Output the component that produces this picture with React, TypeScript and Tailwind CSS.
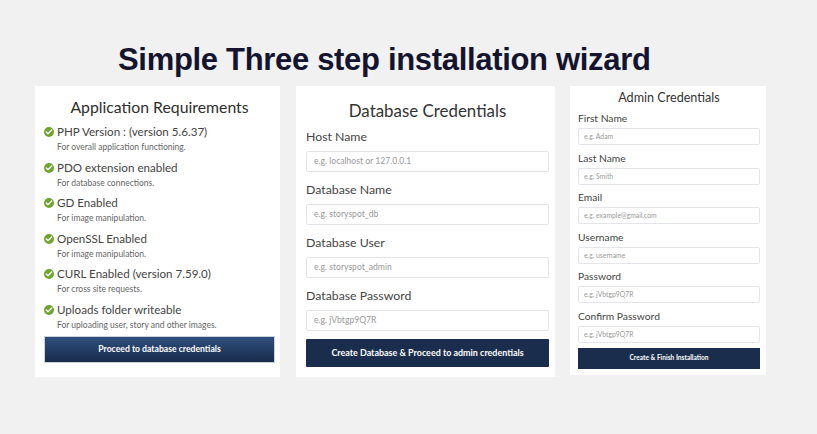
import { Check } from 'lucide-react';

const REQUIREMENTS = [
  { title: 'PHP Version : (version 5.6.37)', note: 'For overall application functioning.' },
  { title: 'PDO extension enabled', note: 'For database connections.' },
  { title: 'GD Enabled', note: 'For image manipulation.' },
  { title: 'OpenSSL Enabled', note: 'For image manipulation.' },
  { title: 'CURL Enabled (version 7.59.0)', note: 'For cross site requests.' },
  { title: 'Uploads folder writeable', note: 'For uploading user, story and other images.' },
];

const DB_FIELDS = [
  { label: 'Host Name', placeholder: 'e.g. localhost or 127.0.0.1' },
  { label: 'Database Name', placeholder: 'e.g. storyspot_db' },
  { label: 'Database User', placeholder: 'e.g. storyspot_admin' },
  { label: 'Database Password', placeholder: 'e.g. jVbtgp9Q7R' },
];

const ADMIN_FIELDS = [
  { label: 'First Name', placeholder: 'e.g. Adam' },
  { label: 'Last Name', placeholder: 'e.g. Smith' },
  { label: 'Email', placeholder: 'e.g. example@gmail.com' },
  { label: 'Username', placeholder: 'e.g. username' },
  { label: 'Password', placeholder: 'e.g. jVbtgp9Q7R' },
  { label: 'Confirm Password', placeholder: 'e.g. jVbtgp9Q7R' },
];

function Requirement({ title, note }: { title: string; note: string }) {
  return (
    <div className="h-[35.6px]">
      <div className="flex items-center gap-[3px] h-[20px]">
        <span className="flex items-center justify-center w-[10px] h-[10px] rounded-full bg-[#6fa52f] shrink-0">
          <Check size={8} strokeWidth={4} className="text-white" />
        </span>
        <span className="text-[11.6px] leading-[20px] text-[#444444]">{title}</span>
      </div>
      <p className="pl-[13px] text-[8.5px] leading-[11px] text-[#666666]">{note}</p>
    </div>
  );
}

function App() {
  return (
    <div className="w-[817px] h-[434px] bg-[#f1f1f1] overflow-hidden font-['Lato',sans-serif]">
      <h1 className="pl-[118px] pt-[41px] h-[86px] text-[31px] leading-[37px] tracking-[-0.32px] font-bold text-[#14142e] font-['Liberation_Sans',sans-serif]">
        Simple Three step installation wizard
      </h1>

      <div className="flex items-start pl-[35px]">
        {/* step 1 */}
        <div className="w-[245px] h-[291px] bg-white pl-[9px] pr-[5px] mr-[16px]">
          <h2 className="pt-[9px] h-[36px] text-center text-[15.8px] leading-[24px] text-[#2e2e2e]">Application Requirements</h2>
          <div className="h-[214px]">
            {REQUIREMENTS.map(r => (
              <Requirement key={r.title} {...r} />
            ))}
          </div>
          <button className="block w-full h-[27px] text-[8.65px] font-bold text-white border border-[#c9d2dc] bg-gradient-to-b from-[#2f4f7d] to-[#182c4c]">
            Proceed to database credentials
          </button>
        </div>

        {/* step 2 */}
        <div className="w-[259px] h-[291px] bg-white pl-[10px] pr-[6px] mr-[15px]">
          <h2 className="pt-[12px] h-[41px] text-center text-[16.9px] leading-[25px] text-[#333333]">Database Credentials</h2>
          {DB_FIELDS.map(f => (
            <div key={f.label} className="h-[53px]">
              <label className="block text-[12.3px] leading-[19px] text-[#444444]">{f.label}</label>
              <div className="mt-[5px] h-[21px] border border-[#e3e5ea] rounded-[2px] pl-[7px] text-[8.6px] leading-[19px] text-[#9a9a9a]">
                {f.placeholder}
              </div>
            </div>
          ))}
          <button className="block w-full h-[28px] rounded-[1px] text-[8.95px] font-bold text-white bg-[#1a2d4d]">
            Create Database &amp; Proceed to admin credentials
          </button>
        </div>

        {/* step 3 */}
        <div className="w-[196px] h-[289px] bg-white pl-[8px] pr-[6px]">
          <h2 className="pt-[3px] h-[24px] text-center text-[12.6px] leading-[18px] text-[#333333]">Admin Credentials</h2>
          {ADMIN_FIELDS.map(f => (
            <div key={f.label} className="h-[39.6px]">
              <label className="block text-[10.25px] leading-[16px] text-[#444444]">{f.label}</label>
              <div className="mt-[2px] h-[17px] border border-[#e3e5ea] rounded-[2px] pl-[5px] text-[6.8px] leading-[15px] text-[#9a9a9a]">
                {f.placeholder}
              </div>
            </div>
          ))}
          <button className="block w-full h-[21px] text-[6.6px] font-bold text-white bg-[#1a2d4d]">
            Create &amp; Finish Installation
          </button>
        </div>
      </div>
    </div>
  );
}

export default App;
